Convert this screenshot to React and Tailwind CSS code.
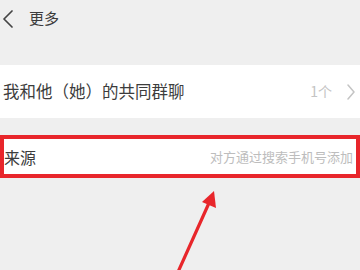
export default function App() {
  return (
    <div
      className="relative w-[360px] h-[270px] overflow-hidden bg-[#efefef]"
      style={{ fontFamily: '"Noto Sans CJK SC", "Noto Sans", sans-serif' }}
    >
      <div className="flex items-center h-[36px]">
        <svg width="16" height="20" viewBox="0 0 16 20" fill="none" stroke="#444" strokeWidth="1.7" strokeLinecap="round" strokeLinejoin="round">
          <polyline points="12,3 4,11 12,19" />
        </svg>
        <span className="ml-[13px] text-[15px] text-[#3c3c3c]">更多</span>
      </div>

      <div className="mt-[29px] h-[53px] bg-white flex items-center justify-between pl-[3px] pr-[4px]">
        <span className="text-[16.5px] text-[#3c3c3c]">我和他（她）的共同群聊</span>
        <div className="flex items-center">
          <span className="text-[14px] text-[#c4c4c4]">1个</span>
          <svg width="10" height="16" viewBox="0 0 10 16" className="ml-[14px]" fill="none" stroke="#c4c4c4" strokeWidth="1.5" strokeLinecap="round" strokeLinejoin="round">
            <polyline points="2,1 8,8 2,15" />
          </svg>
        </div>
      </div>

      <div className="mt-[17px] h-[43px] bg-white border-[4px] border-[#e8262b] flex items-center justify-between pl-0 pr-[3px]">
        <span className="text-[16px] text-[#3c3c3c]">来源</span>
        <span className="text-[13px] text-[#bdbdbd]">对方通过搜索手机号添加</span>
      </div>

      <svg className="absolute left-0 top-0" width="360" height="270" viewBox="0 0 360 270">
        <line x1="178" y1="272" x2="209" y2="203" stroke="#e8262b" strokeWidth="3.2" strokeLinecap="round" />
        <polygon points="214,191 216,208 202,202" fill="#e8262b" />
      </svg>
    </div>
  );
}
